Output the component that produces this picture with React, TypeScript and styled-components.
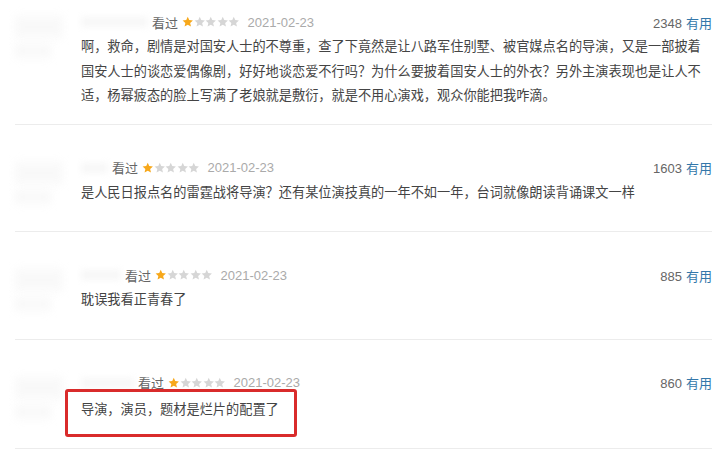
import React from "react";
import styled, { createGlobalStyle } from "styled-components";

const GlobalStyle = createGlobalStyle`
  html, body {
    margin: 0;
    padding: 0;
    background: #fff;
  }
  body {
    font-family: "Liberation Sans", "Noto Sans CJK SC", sans-serif;
  }
`;

const colors = {
  text: "#444",
  meta: "#666",
  date: "#aaa",
  link: "#37a",
  line: "#ececec",
  gold: "#f7a81b",
  grey: "#d6d6d6",
  red: "#d92b2b",
};

const StyledList = styled.section`
  width: 720px;
  height: 450px;
  overflow: hidden;
  padding: 0 8px 0 15px;
  box-sizing: border-box;
`;

const StyledItem = styled.article<{ $first?: boolean }>`
  display: flex;
  align-items: flex-start;
  padding: ${(p) => (p.$first ? "12px 0 15px" : "33px 0 26px")};
  border-bottom: solid 1px ${colors.line};
`;

const StyledAvatarCol = styled.div`
  flex: 0 0 66px;
  display: flex;
  flex-direction: column;
  gap: 6px;
  padding-top: 4px;
`;

const StyledBlur = styled.span<{ $w: number; $h: number }>`
  display: block;
  width: ${(p) => p.$w}px;
  height: ${(p) => p.$h}px;
  background: #f5f5f5;
  filter: blur(4px);
  opacity: 0.6;
`;

const StyledMain = styled.div`
  flex: 1;
  min-width: 0;
`;

const StyledHeader = styled.header`
  display: flex;
  align-items: center;
  justify-content: space-between;
  height: 20px;
  font-size: 13px;
`;

const StyledInfo = styled.div`
  display: flex;
  align-items: center;
  gap: 4px;
  color: ${colors.meta};
`;

const StyledName = styled.span<{ $w: number }>`
  display: inline-block;
  width: ${(p) => p.$w}px;
  height: 10px;
  background: #f7f7f7;
  filter: blur(3px);
`;

const StyledStars = styled.span`
  display: inline-flex;
  margin-right: 4px;
`;

const StyledDate = styled.span`
  color: ${colors.date};
`;

const StyledVotes = styled.div`
  color: ${colors.meta};
  & a {
    color: ${colors.link};
    text-decoration: none;
    margin-left: 4px;
  }
`;

const StyledBody = styled.div<{ $gap?: number }>`
  position: relative;
  margin-top: ${(p) => p.$gap ?? 3}px;
`;

const StyledText = styled.p`
  margin: 0;
  font-size: 13.2px;
  line-height: 24.5px;
  color: ${colors.text};
`;

const StyledHighlight = styled.span`
  position: absolute;
  left: -16px;
  top: -9px;
  width: 232px;
  height: 48px;
  box-sizing: border-box;
  border: solid 3px ${colors.red};
  border-radius: 3px;
  pointer-events: none;
`;

const Star = ({ on }: { on: boolean }) => (
  <svg width="11.5" height="11.5" viewBox="0 0 24 24">
    <polygon
      points="12,1.5 15.1,8.6 22.8,9.3 17,14.4 18.7,22 12,18 5.3,22 7,14.4 1.2,9.3 8.9,8.6"
      fill={on ? colors.gold : colors.grey}
    />
  </svg>
);

type Review = {
  name: number;
  votes: number;
  text: string;
  first?: boolean;
  gap?: number;
  marked?: boolean;
};

const reviews: Review[] = [
  {
    name: 67,
    votes: 2348,
    first: true,
    text:
      "啊，救命，剧情是对国安人士的不尊重，查了下竟然是让八路军住别墅、被官媒点名的导演，又是一部披着国安人士的谈恋爱偶像剧，好好地谈恋爱不行吗？为什么要披着国安人士的外衣？另外主演表现也是让人不适，杨幂疲态的脸上写满了老娘就是敷衍，就是不用心演戏，观众你能把我咋滴。",
  },
  {
    name: 27,
    votes: 1603,
    text: "是人民日报点名的雷霆战将导演？还有某位演技真的一年不如一年，台词就像朗读背诵课文一样",
  },
  { name: 40, votes: 885, text: "耽误我看正青春了" },
  {
    name: 53,
    votes: 860,
    gap: 5,
    marked: true,
    text: "导演，演员，题材是烂片的配置了",
  },
];

const App = () => (
  <>
    <GlobalStyle />
    <StyledList>
      {reviews.map((r, i) => (
        <StyledItem key={i} $first={r.first}>
          <StyledAvatarCol>
            <StyledBlur $w={48} $h={22} />
            <StyledBlur $w={36} $h={14} />
          </StyledAvatarCol>
          <StyledMain>
            <StyledHeader>
              <StyledInfo>
                <StyledName $w={r.name} />
                <span>看过</span>
                <StyledStars>
                  {[0, 1, 2, 3, 4].map((s) => (
                    <Star key={s} on={s === 0} />
                  ))}
                </StyledStars>
                <StyledDate>2021-02-23</StyledDate>
              </StyledInfo>
              <StyledVotes>
                {r.votes}
                <a href="#">有用</a>
              </StyledVotes>
            </StyledHeader>
            <StyledBody $gap={r.gap}>
              <StyledText>{r.text}</StyledText>
              {r.marked && <StyledHighlight />}
            </StyledBody>
          </StyledMain>
        </StyledItem>
      ))}
    </StyledList>
  </>
);

export default App;
